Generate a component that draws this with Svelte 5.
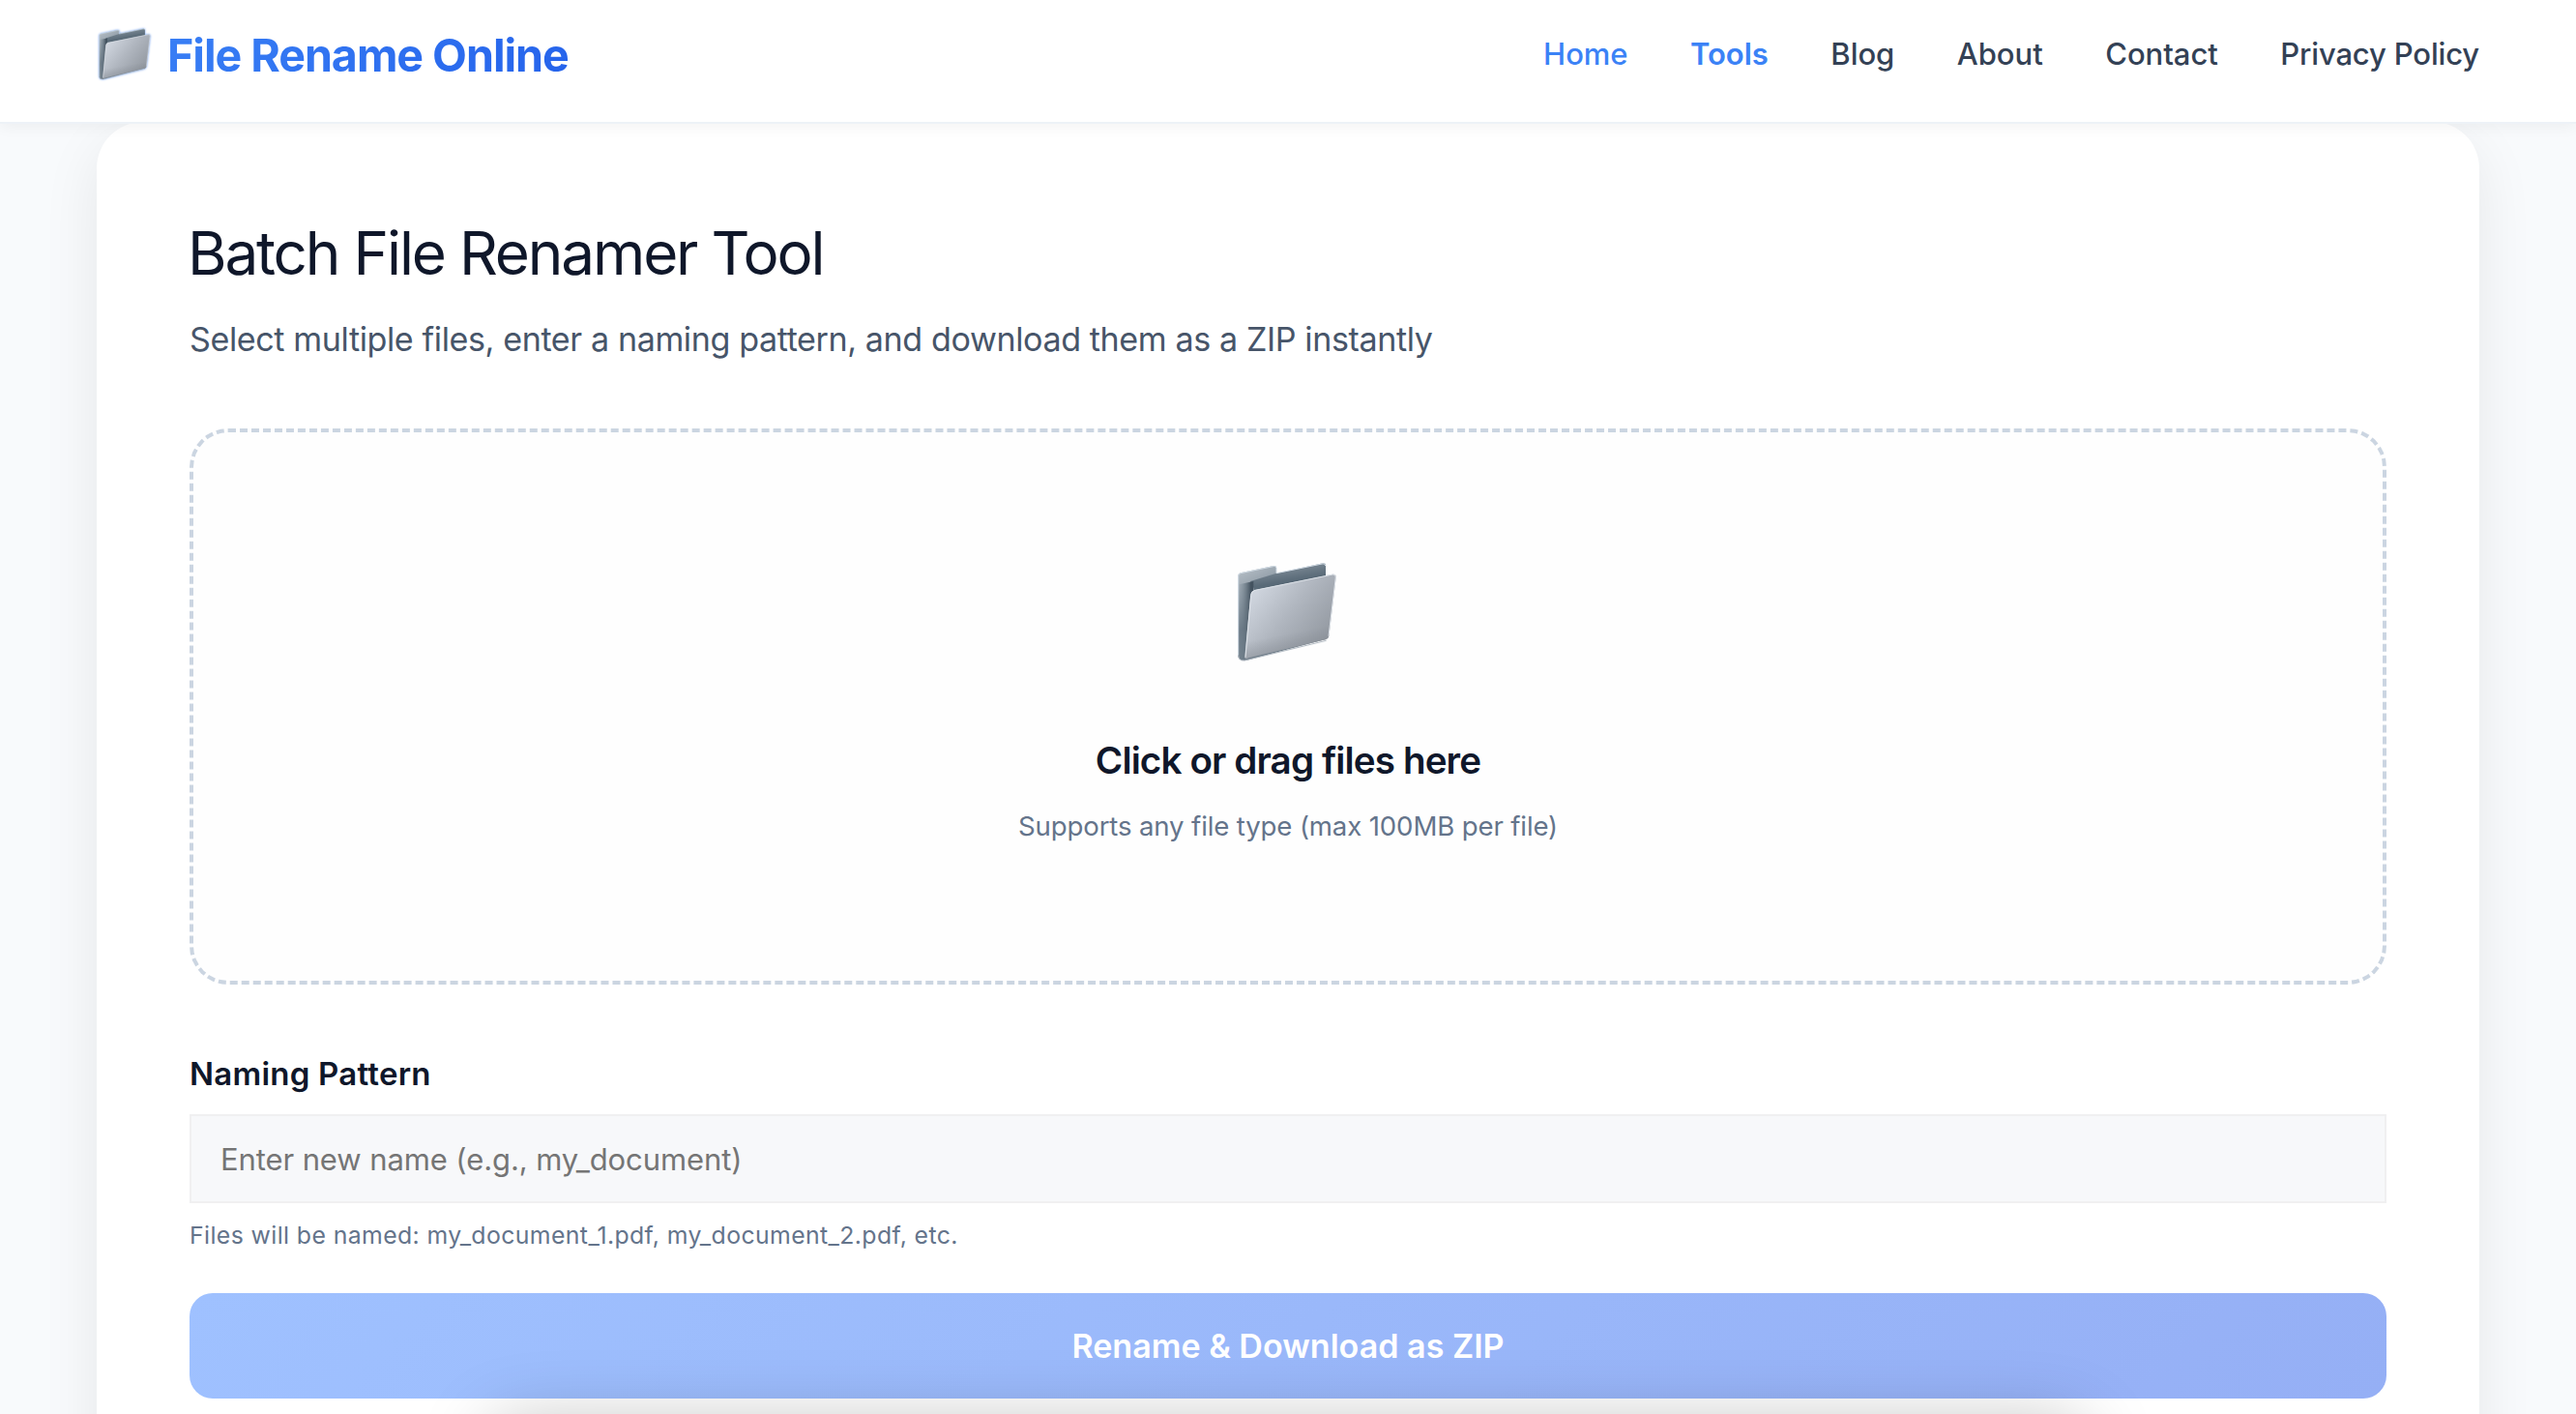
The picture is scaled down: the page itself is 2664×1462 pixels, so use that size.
<script>
	const links = [
		{ label: 'Home', highlight: true },
		{ label: 'Tools', highlight: true, current: true },
		{ label: 'Blog' },
		{ label: 'About' },
		{ label: 'Contact' },
		{ label: 'Privacy Policy' }
	];

	let pattern = $state('');
</script>

{#snippet folder(id)}
	<svg class="folder" viewBox="120 60 308 312" xmlns="http://www.w3.org/2000/svg" aria-hidden="true">
		<defs>
			<linearGradient id="{id}-back" x1="122" y1="90" x2="250" y2="330" gradientUnits="userSpaceOnUse">
				<stop offset="0" stop-color="#b3bcc4" />
				<stop offset="0.3" stop-color="#8c99a4" />
				<stop offset="0.6" stop-color="#63727f" />
				<stop offset="1" stop-color="#6f7d89" />
			</linearGradient>
			<linearGradient id="{id}-shade" x1="250" y1="80" x2="256" y2="126" gradientUnits="userSpaceOnUse">
				<stop offset="0" stop-color="#75838f" />
				<stop offset="1" stop-color="#4f616f" />
			</linearGradient>
			<linearGradient id="{id}-side" x1="124" y1="0" x2="162" y2="0" gradientUnits="userSpaceOnUse">
				<stop offset="0" stop-color="#8997a2" stop-opacity="0.2" />
				<stop offset="1" stop-color="#43525f" />
			</linearGradient>
			<linearGradient id="{id}-front" x1="180" y1="150" x2="390" y2="320" gradientUnits="userSpaceOnUse">
				<stop offset="0" stop-color="#ced4dd" />
				<stop offset="0.45" stop-color="#b0b6bf" />
				<stop offset="1" stop-color="#91979f" />
			</linearGradient>
			<linearGradient id="{id}-foot" x1="262" y1="285" x2="272" y2="340" gradientUnits="userSpaceOnUse">
				<stop offset="0" stop-color="#7e848c" stop-opacity="0" />
				<stop offset="1" stop-color="#7e848c" stop-opacity="0.45" />
			</linearGradient>
		</defs>
		<!-- back panel with its tab -->
		<path d="M122 103Q122 96 129 94L232 72Q241 71 241 78V95L385 64Q394 63 394 70V300L146 366Q122 368 122 350Z" fill="url(#{id}-back)" />
		<path d="M241 95L390 66Q394 66 394 70V110L174 148L160 120Z" fill="url(#{id}-shade)" opacity="0.85" />
		<path d="M125 130L170 120V150L148 364Q125 362 125 350Z" fill="url(#{id}-side)" />
		<path d="M123 350V103Q123 97 130 95L233 73.500Q241 72 241 79V95L385 65.500Q393 64 393 72" fill="none" stroke="#d3dde6" stroke-width="3" />
		<!-- front panel -->
		<path d="M161 163Q162 150 175 147L416 98Q427 97 426 108L404 290Q402 299 394 301L153 358Q142 366 143 352Z" fill="url(#{id}-front)" />
		<path d="M161 163Q162 150 175 147L416 98Q427 97 426 108L404 290Q402 299 394 301L153 358Q142 366 143 352Z" fill="url(#{id}-foot)" />
		<path d="M145 356L162 163Q163 151 175 148L416 99Q426 98 425 108L403 290" fill="none" stroke="#dfe4ea" stroke-width="3" />
		<path d="M123 350Q124 367 142 366L396 304" fill="none" stroke="#b4bcc4" stroke-width="3" />
	</svg>
{/snippet}

<header class="header">
	<a class="logo" href="/">
		<span class="logo-icon">{@render folder('logo')}</span>
		<span class="logo-text">File Rename Online</span>
	</a>
	<nav class="nav">
		{#each links as link}
			<a href="/" class:highlight={link.highlight} class:current={link.current}>{link.label}</a>
		{/each}
	</nav>
</header>

<main class="card">
	<h1>Batch File Renamer Tool</h1>
	<p class="lead">Select multiple files, enter a naming pattern, and download them as a ZIP instantly</p>

	<div class="dropzone">
		<span class="drop-icon">{@render folder('drop')}</span>
		<h2>Click or drag files here</h2>
		<p>Supports any file type (max 100MB per file)</p>
	</div>

	<label for="pattern">Naming Pattern</label>
	<input id="pattern" type="text" placeholder="Enter new name (e.g., my_document)" bind:value={pattern} />
	<p class="hint">Files will be named: my_document_1.pdf, my_document_2.pdf, etc.</p>

	<button type="button" disabled>Rename &amp; Download as ZIP</button>
</main>

<div class="bottom-shadow"></div>

<style>
	:global(body) {
		height: 1462px;
		overflow: hidden;
		background: #f8fafc;
		font-family: Inter, "Liberation Sans", sans-serif;
		color: #0f172a;
	}

	:global(#app) {
		height: 1462px;
		overflow: hidden;
	}

	h1, h2, p {
		margin: 0;
	}

	.header {
		position: relative;
		z-index: 2;
		box-sizing: border-box;
		height: 128px;
		padding: 0 100px 14px;
		display: flex;
		align-items: center;
		justify-content: space-between;
		background: #fff;
		border-bottom: 2px solid #edf2f7;
		box-shadow: 0 2px 16px rgba(0, 0, 0, 0.06);
	}

	.logo {
		display: flex;
		align-items: center;
		gap: 17px;
		text-decoration: none;
	}

	.logo-icon {
		width: 54px;
		height: 54px;
		margin-left: 2px;
		filter: drop-shadow(0 0 1px #6f9ff0);
	}

	.folder {
		display: block;
		width: 100%;
		height: 100%;
	}

	.logo-text {
		padding-top: 2px;
		font-size: 46.6px;
		font-weight: 700;
		line-height: 56px;
		letter-spacing: -1.04px;
		background: linear-gradient(135deg, #397ff5, #2563eb);
		background-clip: text;
		color: transparent;
	}

	.nav {
		display: flex;
		gap: 64.6px;
	}

	.nav a {
		font-size: 31px;
		font-weight: 500;
		line-height: 40px;
		letter-spacing: -0.05px;
		color: #334155;
		text-decoration: none;
	}

	.nav a.highlight {
		color: #3b82f6;
	}

	.nav a.current {
		font-weight: 600;
	}

	.nav a:last-child {
		letter-spacing: -0.16px;
	}

	.card {
		box-sizing: border-box;
		height: 1500px;
		margin: -2px 100px 0;
		padding: 96px;
		background: #fff;
		border-radius: 48px;
		box-shadow: 0 20px 60px rgba(0, 0, 0, 0.08);
	}

	h1 {
		margin-left: -2px;
		padding-top: 1px;
		font-size: 62px;
		font-weight: 400;
		line-height: 78px;
		letter-spacing: -2.16px;
	}

	.lead {
		margin-top: 23px;
		font-size: 34.1px;
		line-height: 54px;
		letter-spacing: -0.39px;
		color: #475569;
	}

	.dropzone {
		box-sizing: border-box;
		height: 575px;
		margin-top: 65px;
		padding-top: 134px;
		display: flex;
		flex-direction: column;
		align-items: center;
		background: #fefefe;
		border: 4px dashed #cbd5e1;
		border-radius: 40px;
	}

	.drop-icon {
		width: 104px;
		height: 104px;
		margin-right: 2px;
		margin-bottom: 77px;
	}

	.dropzone h2 {
		font-size: 38.6px;
		font-weight: 600;
		line-height: 48px;
		letter-spacing: -0.87px;
	}

	.dropzone p {
		margin-top: 24px;
		font-size: 27.6px;
		line-height: 40px;
		letter-spacing: -0.14px;
		color: #64748b;
	}

	label {
		display: block;
		margin-top: 68px;
		font-size: 33px;
		font-weight: 600;
		line-height: 48px;
		letter-spacing: 0.23px;
	}

	input {
		display: block;
		box-sizing: border-box;
		width: 100%;
		height: 92px;
		margin-top: 18px;
		padding: 0 30px;
		border: 2px solid #f0f0f1;
		border-radius: 0;
		background: #f7f8fa;
		font-family: inherit;
		font-size: 31px;
		letter-spacing: -0.1px;
		color: #0f172a;
	}

	input::placeholder {
		color: #757575;
	}

	.hint {
		margin-top: 14px;
		font-size: 24.8px;
		line-height: 38px;
		letter-spacing: 0.4px;
		color: #64748b;
	}

	button {
		display: block;
		width: 100%;
		height: 109px;
		margin-top: 41px;
		padding: 0;
		border: none;
		border-radius: 24px;
		background: linear-gradient(135deg, #9fc1ff, #95aff5);
		font-family: inherit;
		font-size: 34.1px;
		font-weight: 600;
		color: #fff;
	}

	/* soft shade rising from the lower edge of the window */
	.bottom-shadow {
		position: fixed;
		top: 1472px;
		left: 50%;
		width: 1650px;
		height: 200px;
		transform: translateX(-50%);
		border-radius: 30px;
		box-shadow: 0 0 72px rgba(0, 0, 0, 0.25);
		pointer-events: none;
	}
</style>
